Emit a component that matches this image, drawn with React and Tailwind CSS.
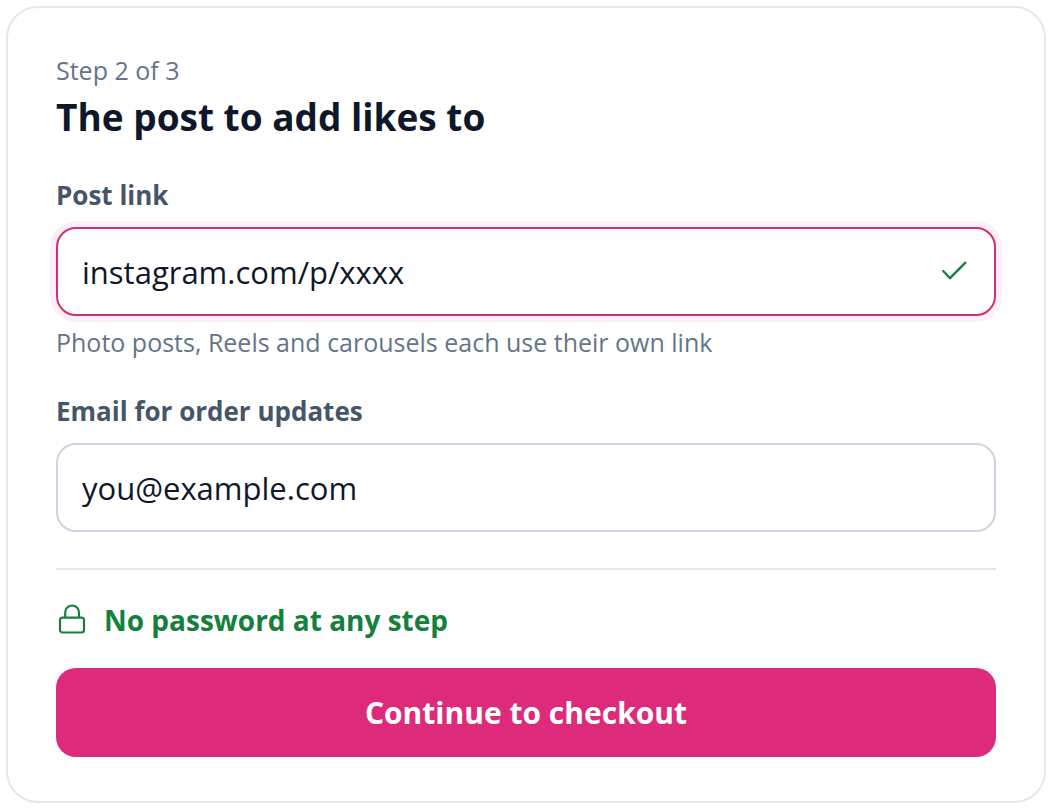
import React from 'react';

function CheckIcon() {
  return (
    <svg viewBox="0 0 32 32" fill="none" stroke="currentColor" strokeWidth="2.4" strokeLinecap="round" strokeLinejoin="round" className="size-8" aria-hidden="true">
      <path d="M3.2 15l6.8 7.2L25.2 6.8" />
    </svg>
  );
}

function LockIcon() {
  return (
    <svg viewBox="0 0 32 32" fill="none" stroke="currentColor" strokeWidth="2.2" strokeLinejoin="round" className="size-8 shrink-0" aria-hidden="true">
      <rect x="4" y="13.7" width="24" height="14.8" rx="2.5" />
      <path d="M9.2 13.7V8.4a6.9 6.9 0 0 1 13.8 0v5.3" />
    </svg>
  );
}

function Field({ id, label, type, value, hint, valid }) {
  return (
    <div className="flex flex-col">
      <label htmlFor={id} className="text-[26px] leading-[34px] font-bold text-[#475569]">
        {label}
      </label>
      <div className="relative mt-[15px]">
        <input
          id={id}
          type={type}
          defaultValue={value}
          className={
            valid
              ? 'block h-[89px] w-full rounded-[20px] border-2 border-[#cf2f74] bg-white pl-6 pr-20 text-[31px] text-[#0f172a] outline-none ring-6 ring-[#fdeff6]'
              : 'block h-[89px] w-full rounded-[20px] border-2 border-[#cbd5e1] bg-white px-6 text-[31px] text-[#0f172a] outline-none'
          }
        />
        {valid && (
          <div className="pointer-events-none absolute inset-y-0 right-6 flex items-center text-[#15803d]">
            <CheckIcon />
          </div>
        )}
      </div>
      {hint && <p className="mt-2 text-[25px] leading-[36px] text-[#64748b]">{hint}</p>}
    </div>
  );
}

export default function App() {
  return (
    <main className="p-1.5 font-['Open_Sans','Noto_Sans',sans-serif]">
      <form className="flex flex-col rounded-[32px] border-2 border-[#e2e8f0] bg-white px-12 py-11">
        <p className="text-[25px] leading-[36px] text-[#64748b]">Step 2 of 3</p>
        <h1 className="text-[37px] leading-[58px] font-bold text-[#0f172a]">The post to add likes to</h1>

        <div className="mt-8 flex flex-col gap-[34px]">
          <Field
            id="post-link"
            label="Post link"
            type="text"
            value="instagram.com/p/xxxx"
            hint="Photo posts, Reels and carousels each use their own link"
            valid
          />
          <Field id="email" label="Email for order updates" type="email" value="you@example.com" />
        </div>

        <div className="mt-9 flex items-center gap-4 border-t-2 border-[#e2e8f0] pt-8 text-[#15803d]">
          <LockIcon />
          <span className="text-[28px] leading-[36px] font-bold">No password at any step</span>
        </div>

        <button type="button" className="mt-[30px] h-[89px] rounded-[20px] bg-[#dd2a7b] text-[30px] font-bold text-white">
          Continue to checkout
        </button>
      </form>
    </main>
  );
}
